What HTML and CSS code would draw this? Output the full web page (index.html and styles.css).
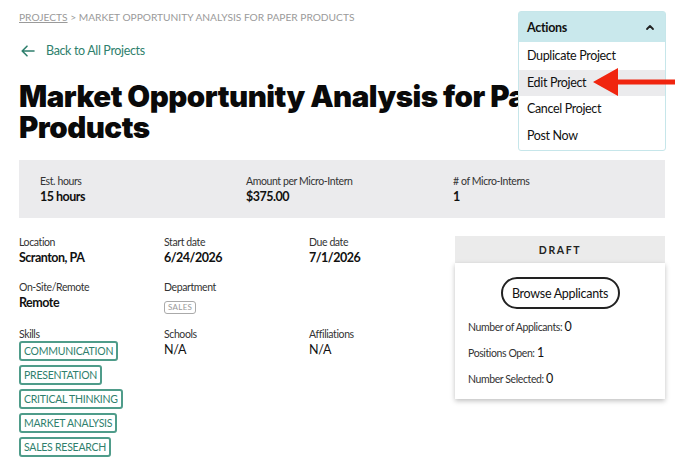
FILE: index.html
```html
<!DOCTYPE html>
<html lang="en">
<head>
  <meta charset="UTF-8">
  <meta name="viewport" content="width=device-width, initial-scale=1.0">
  <title>Market Opportunity Analysis for Paper Products</title>
  <link rel="stylesheet" href="styles.css">
</head>
<body>
  <div class="page">
    <div class="breadcrumb">
      <a href="#">Projects</a> &gt; Market Opportunity Analysis for Paper Products
    </div>

    <a class="back-link" href="#">
      <svg width="14" height="12" viewBox="0 0 14 12" fill="none" stroke="currentColor" stroke-width="1.6" stroke-linecap="round" stroke-linejoin="round">
        <path d="M13 6H1.5M6 1.2L1.2 6 6 10.8"/>
      </svg>
      Back to All Projects
    </a>

    <h1 class="title">Market Opportunity Analysis for Paper Products</h1>

    <div class="stats">
      <div class="stat">
        <div class="label">Est. hours</div>
        <div class="value">15 hours</div>
      </div>
      <div class="stat">
        <div class="label">Amount per Micro-Intern</div>
        <div class="value">$375.00</div>
      </div>
      <div class="stat">
        <div class="label">#&nbsp;of Micro-Interns</div>
        <div class="value">1</div>
      </div>
    </div>

    <div class="details">
      <div class="info-grid">
        <div class="field">
          <div class="label">Location</div>
          <div class="value">Scranton, PA</div>
        </div>
        <div class="field">
          <div class="label">Start date</div>
          <div class="value">6/24/2026</div>
        </div>
        <div class="field">
          <div class="label">Due date</div>
          <div class="value">7/1/2026</div>
        </div>

        <div class="field">
          <div class="label">On-Site/Remote</div>
          <div class="value">Remote</div>
        </div>
        <div class="field">
          <div class="label">Department</div>
          <span class="dept-tag">SALES</span>
        </div>
        <div class="field"></div>

        <div class="field">
          <div class="label">Skills</div>
          <div class="skills">
            <span class="skill">Communication</span>
            <span class="skill">Presentation</span>
            <span class="skill">Critical Thinking</span>
            <span class="skill">Market Analysis</span>
            <span class="skill">Sales Research</span>
          </div>
        </div>
        <div class="field">
          <div class="label">Schools</div>
          <div class="plain">N/A</div>
        </div>
        <div class="field">
          <div class="label">Affiliations</div>
          <div class="plain">N/A</div>
        </div>
      </div>

      <div class="status-panel">
        <div class="status-head">DRAFT</div>
        <div class="status-card">
          <button class="browse-btn">Browse Applicants</button>
          <div class="count">Number of Applicants: <span>0</span></div>
          <div class="count">Positions Open: <span>1</span></div>
          <div class="count">Number Selected: <span>0</span></div>
        </div>
      </div>
    </div>

    <!-- actions dropdown, open -->
    <div class="actions">
      <div class="actions-head">
        Actions
        <svg width="10" height="7" viewBox="0 0 10 7" fill="none" stroke="#222" stroke-width="1.8" stroke-linecap="round" stroke-linejoin="round">
          <path d="M2 5L5 2 8 5"/>
        </svg>
      </div>
      <ul class="actions-menu">
        <li>Duplicate Project</li>
        <li class="active">Edit Project</li>
        <li>Cancel Project</li>
        <li>Post Now</li>
      </ul>
    </div>

    <svg class="pointer" width="84" height="30" viewBox="0 0 84 30">
      <path d="M0 15L25 1V12.5H82V17.5H25V29Z" fill="#f0250f"/>
    </svg>
  </div>
</body>
</html>
```

FILE: styles.css
```css
body {
  margin: 0;
  font-family: Lato, "Open Sans", sans-serif;
  color: #1a1a1a;
  background: #fff;
}
.page {
  position: relative;
  width: 646px;
  padding: 11px 0 0 19px;
}
.breadcrumb {
  font-size: 10.2px;
  color: #9a9a9a;
  text-transform: uppercase;
  line-height: 13px;
}
.breadcrumb a {
  color: #9a9a9a;
  text-decoration: underline;
}
.back-link {
  display: flex;
  align-items: center;
  gap: 11px;
  margin-top: 19px;
  padding-left: 2px;
  color: #2f7f6d;
  font-size: 12.5px;
  letter-spacing: -0.35px;
  text-decoration: none;
  line-height: 16px;
}
.title {
  font-family: Inter, "Liberation Sans", sans-serif;
  font-weight: 900;
  font-size: 29.5px;
  line-height: 31px;
  letter-spacing: -0.5px;
  color: #0a0a0a;
  margin: 22px 0 17px;
}
.stats {
  display: grid;
  grid-template-columns: 206px 207px 1fr;
  background: #ebebed;
  padding: 15px 21px 13px;
}
.label {
  font-size: 10.5px;
  letter-spacing: -0.4px;
  color: #333;
  line-height: 13px;
}
.value {
  font-size: 12.5px;
  font-weight: 700;
  letter-spacing: -0.5px;
  color: #111;
  margin-top: 1px;
  line-height: 16px;
}
.details {
  display: grid;
  grid-template-columns: 435px 1fr;
  gap: 0 1px;
  margin-top: 18px;
}
.info-grid {
  display: grid;
  grid-template-columns: 145px 145px 145px;
  row-gap: 14px;
}
.field {
  min-height: 31px;
}
.dept-tag {
  display: inline-block;
  margin-top: 3px;
  border: 1.5px solid #aaa;
  border-radius: 3px;
  color: #999;
  font-size: 8px;
  padding: 1.5px 3px;
  line-height: 8px;
  letter-spacing: 0.3px;
}
.plain {
  font-size: 12.5px;
  letter-spacing: -0.3px;
  color: #111;
  margin-top: 1px;
  line-height: 16px;
}
.skills {
  display: flex;
  flex-direction: column;
  align-items: flex-start;
  gap: 4px;
  margin-top: 0;
}
.skill {
  border: 2px solid #4f9c8a;
  border-radius: 3px;
  color: #2f7f6d;
  font-size: 10.5px;
  letter-spacing: -0.25px;
  text-transform: uppercase;
  padding: 2px 3px;
  line-height: 12px;
}
.status-panel {
  margin-top: 0;
}
.status-head {
  background: #ebebeb;
  text-align: center;
  font-size: 10.5px;
  font-weight: 700;
  letter-spacing: 1.6px;
  color: #222;
  height: 27px;
  line-height: 28px;
}
.status-card {
  background: #fff;
  box-shadow: 0 2px 5px rgba(0, 0, 0, 0.25);
  padding: 14px 13px 12px;
}
.browse-btn {
  display: block;
  margin: 0 auto 9px;
  width: 119px;
  height: 32px;
  border: 2px solid #222;
  border-radius: 16px;
  background: #fff;
  font-family: Lato, sans-serif;
  font-size: 12.5px;
  letter-spacing: -0.3px;
  color: #111;
  cursor: pointer;
}
.count {
  font-size: 10.5px;
  letter-spacing: -0.4px;
  color: #333;
  line-height: 16px;
  margin-top: 10px;
}
.count span {
  font-size: 12.5px;
  line-height: 1;
  color: #111;
}
.actions {
  position: absolute;
  left: 518px;
  top: 11px;
  width: 146px;
  border: 1px solid #c6e6ea;
  border-radius: 3px;
  background: #fff;
}
.actions-head {
  display: flex;
  justify-content: space-between;
  align-items: center;
  background: #c9e8ec;
  height: 30px;
  padding: 0 10px 0 8px;
  font-size: 12.5px;
  letter-spacing: -0.3px;
  font-weight: 700;
  color: #111;
}
.actions-menu {
  list-style: none;
  margin: 0;
  padding: 1px 0 1px;
}
.actions-menu li {
  height: 26.5px;
  line-height: 26px;
  padding-left: 8px;
  font-size: 12.5px;
  letter-spacing: -0.35px;
  color: #111;
}
.actions-menu li.active {
  background: #ebebed;
}
.pointer {
  position: absolute;
  left: 593px;
  top: 67px;
}
```
